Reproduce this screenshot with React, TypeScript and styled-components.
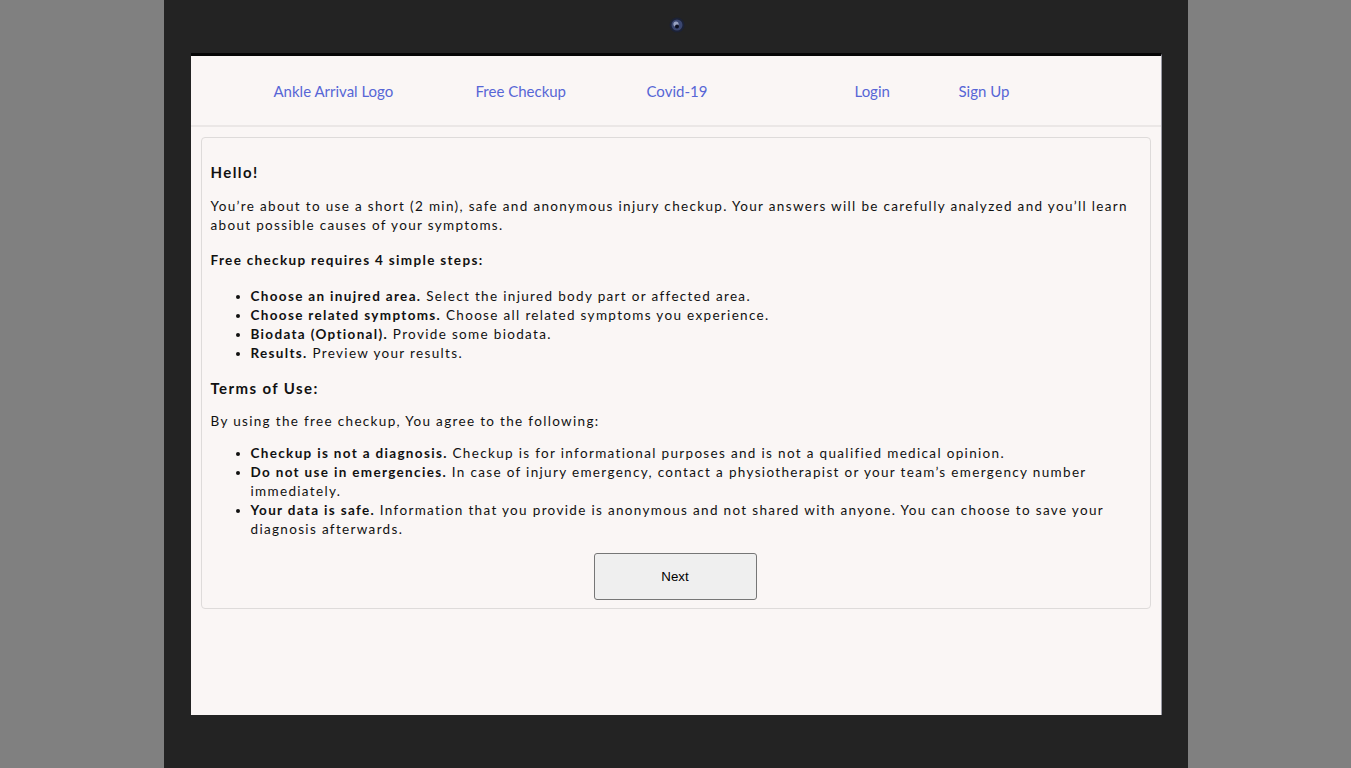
import React from "react";
import styled, { createGlobalStyle } from "styled-components";

const Global = createGlobalStyle`
  html, body { margin: 0; padding: 0; background: #808080; height: 100%; overflow: hidden; }
  * { box-sizing: border-box; }
`;

const Frame = styled.div`
  width: 1024px;
  height: 768px;
  margin: 0 auto;
  background: #232323;
  padding: 53px 0 0 27px;
  position: relative;
`;

const Camera = styled.div`
  position: absolute;
  left: 505px;
  top: 17px;
  width: 16px;
  height: 16px;
`;

const Screen = styled.div`
  width: 971px;
  height: 662px;
  background: #faf6f5;
  border-top: 3px solid #050505;
  border-right: 1px solid #9a9aa4;
  display: flex;
  flex-direction: column;
`;

const Nav = styled.nav`
  height: 71px;
  flex-shrink: 0;
  border-bottom: 2px solid #ebe7e6;
  display: grid;
  grid-template-columns: 202px 171px 208px 104px auto;
  align-items: center;
  padding-left: 83px;
`;

const NavLink = styled.a`
  font-family: Lato, "Noto Sans", sans-serif;
  font-size: 15px;
  color: #5766d6;
  text-decoration: none;
  justify-self: start;
`;

const Card = styled.section`
  margin: 10px 10px 0 10px;
  border: 1px solid #dedbda;
  border-radius: 4px;
  padding: 9px 10px 8px 9px;
  display: flex;
  flex-direction: column;
  font-family: Lato, "Noto Sans", sans-serif;
  color: #111;
  font-size: 13.5px;
  letter-spacing: 1.33px;
  line-height: 19px;
`;

const Heading = styled.h3<{ $top: number }>`
  margin: ${(p) => p.$top}px 0 0 0;
  font-size: 15px;
  line-height: 18px;
  font-weight: 700;
  letter-spacing: 1.4px;
`;

const Para = styled.p<{ $top: number; $bold?: boolean }>`
  margin: ${(p) => p.$top}px 0 0 0;
  font-weight: ${(p) => (p.$bold ? 700 : 400)};
`;

const List = styled.ul<{ $top: number }>`
  margin: ${(p) => p.$top}px 0 0 0;
  padding-left: 40px;
  list-style: disc;
`;

const Item = styled.li`
  & b { font-weight: 700; }
`;

const NextButton = styled.button`
  align-self: center;
  margin-top: 14px;
  width: 163px;
  height: 47px;
  background: #efefef;
  border: 1px solid #767676;
  border-radius: 3px;
  font-family: "Liberation Sans", Arial, sans-serif;
  font-size: 13.3px;
  color: #000;
  letter-spacing: 0;
`;

export default function App() {
  return (
    <>
      <Global />
      <Frame>
        <Camera>
          <svg width="16" height="16" viewBox="0 0 16 16">
            <circle cx="8" cy="8" r="7.5" fill="#1c2236" />
            <circle cx="8" cy="8" r="5.5" fill="#3a4670" />
            <circle cx="7" cy="7" r="2.6" fill="#b8c2dc" opacity="0.75" />
            <circle cx="8" cy="9.5" r="2" fill="#0d1020" />
          </svg>
        </Camera>
        <Screen>
          <Nav>
            <NavLink href="#">Ankle Arrival Logo</NavLink>
            <NavLink href="#">Free Checkup</NavLink>
            <NavLink href="#">Covid-19</NavLink>
            <NavLink href="#">Login</NavLink>
            <NavLink href="#">Sign Up</NavLink>
          </Nav>
          <Card>
            <Heading $top={16}>Hello!</Heading>
            <Para $top={16}>
              You’re about to use a short (2 min), safe and anonymous injury checkup. Your answers will be carefully analyzed and you’ll learn about possible causes of your symptoms.
            </Para>
            <Para $top={16} $bold>Free checkup requires 4 simple steps:</Para>
            <List $top={17}>
              <Item><b>Choose an inujred area.</b> Select the injured body part or affected area.</Item>
              <Item><b>Choose related symptoms.</b> Choose all related symptoms you experience.</Item>
              <Item><b>Biodata (Optional).</b> Provide some biodata.</Item>
              <Item><b>Results.</b> Preview your results.</Item>
            </List>
            <Heading $top={16}>Terms of Use:</Heading>
            <Para $top={15}>By using the free checkup, You agree to the following:</Para>
            <List $top={13}>
              <Item><b>Checkup is not a diagnosis.</b> Checkup is for informational purposes and is not a qualified medical opinion.</Item>
              <Item><b>Do not use in emergencies.</b> In case of injury emergency, contact a physiotherapist or your team’s emergency number immediately.</Item>
              <Item><b>Your data is safe.</b> Information that you provide is anonymous and not shared with anyone. You can choose to save your diagnosis afterwards.</Item>
            </List>
            <NextButton>Next</NextButton>
          </Card>
        </Screen>
      </Frame>
    </>
  );
}
